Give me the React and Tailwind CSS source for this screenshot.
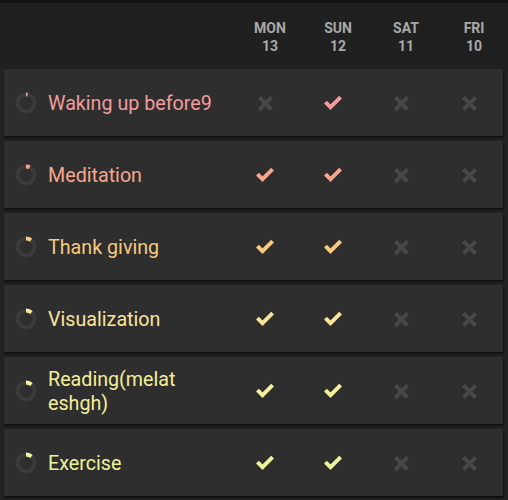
import React from 'react'

const DAYS = [
  { d: 'MON', n: 13 },
  { d: 'SUN', n: 12 },
  { d: 'SAT', n: 11 },
  { d: 'FRI', n: 10 },
]

const HABITS = [
  { name: 'Waking up before9', color: '#f39c9c', arc: 0.03, done: [false, true, false, false] },
  { name: 'Meditation', color: '#f6a68b', arc: 0.07, done: [true, true, false, false] },
  { name: 'Thank giving', color: '#f8c97e', arc: 0.1, done: [true, true, false, false] },
  { name: 'Visualization', color: '#fae49c', arc: 0.11, done: [true, true, false, false] },
  { name: 'Reading(melat eshgh)', color: '#f5ee9a', arc: 0.11, done: [true, true, false, false] },
  { name: 'Exercise', color: '#edf39b', arc: 0.11, done: [true, true, false, false] },
]

function Ring({ color, arc }) {
  const c = 2 * Math.PI * 8.5
  return (
    <svg width="22" height="22" viewBox="0 0 22 22" className="shrink-0">
      <circle cx="11" cy="11" r="8.5" fill="none" stroke="#3b3b3b" strokeWidth="4" />
      <circle
        cx="11" cy="11" r="8.5" fill="none" stroke={color} strokeWidth="4"
        strokeDasharray={`${c * arc} ${c}`} transform="rotate(-90 11 11)"
      />
    </svg>
  )
}

function Check({ color }) {
  return (
    <svg width="20" height="20" viewBox="0 0 24 24">
      <path d="M4.5 12.5l4.5 4.5L19.5 6.5" fill="none" stroke={color} strokeWidth="4.6" strokeLinecap="square" />
    </svg>
  )
}

function Cross() {
  return (
    <svg width="15" height="15" viewBox="0 0 14 14">
      <path d="M2.5 2.5l9 9M11.5 2.5l-9 9" fill="none" stroke="#484848" strokeWidth="3.6" strokeLinecap="square" />
    </svg>
  )
}

export default function App() {
  return (
    <div className="w-[508px] h-[500px] bg-[#222222] overflow-hidden" style={{ fontFamily: 'Roboto, "Liberation Sans", sans-serif' }}>
      {/* Header */}
      <div className="h-[69px] bg-[#202020] border-t-[3px] border-[#151515] flex pl-[4px]">
        <div className="flex-1" />
        {DAYS.map((day) => (
          <div key={day.d} className="w-[68px] flex flex-col items-center justify-center pt-[2px] text-[14px] font-bold leading-[18px] text-[#a9a9a9]">
            <span>{day.d}</span>
            <span>{day.n}</span>
          </div>
        ))}
      </div>

      {/* Rows */}
      <div className="flex flex-col gap-[5px] pl-[4px] pr-[5px]">
        {HABITS.map((h) => (
          <div key={h.name} className="h-[67px] flex items-center bg-[#2e2e2e] shadow-[1px_2px_2px_rgba(0,0,0,0.55)]">
            <div className="flex-1 flex items-center gap-[11px] pl-[11px] min-w-0">
              <Ring color={h.color} arc={h.arc} />
              <span className="text-[19.7px] leading-[24px] pt-[2px] pr-2" style={{ color: h.color }}>{h.name}</span>
            </div>
            {h.done.map((d, i) => (
              <div key={i} className="w-[68px] flex justify-center items-center pt-[1px]">
                {d ? <Check color={h.color} /> : <Cross />}
              </div>
            ))}
          </div>
        ))}
      </div>
    </div>
  )
}
